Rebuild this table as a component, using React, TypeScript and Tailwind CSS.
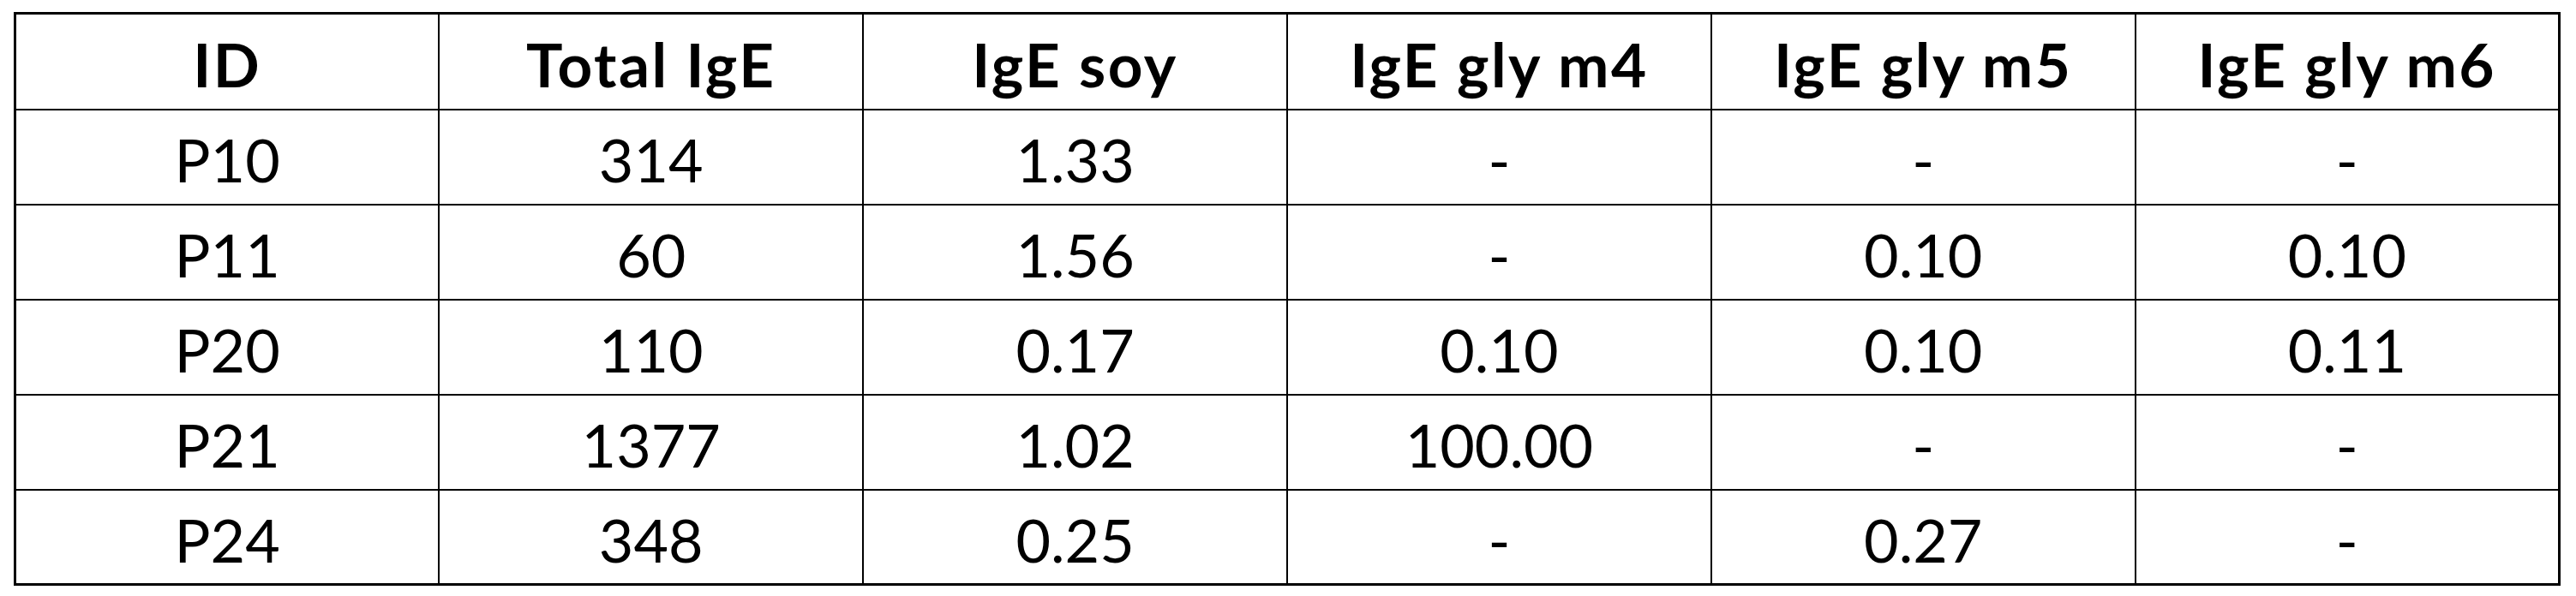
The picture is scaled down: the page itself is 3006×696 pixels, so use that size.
const headers = ['ID', 'Total IgE', 'IgE soy', 'IgE gly m4', 'IgE gly m5', 'IgE gly m6'];

const rows = [
  ['P10', '314', '1.33', '-', '-', '-'],
  ['P11', '60', '1.56', '-', '0.10', '0.10'],
  ['P20', '110', '0.17', '0.10', '0.10', '0.11'],
  ['P21', '1377', '1.02', '100.00', '-', '-'],
  ['P24', '348', '0.25', '-', '0.27', '-'],
];

export default function App() {
  return (
    <div className="min-h-[696px] w-[3006px] bg-white pl-[16px] pt-[14px] font-['Lato','Open_Sans',sans-serif] text-black">
      <table className="w-[2972px] table-fixed border-collapse border-[3px] border-black">
        <thead>
          <tr className="h-[112px]">
            {headers.map((h) => (
              <th key={h} className="border-2 border-black pt-[6px] text-center align-middle text-[71px] font-bold leading-none tracking-[2.5px]">
                {h}
              </th>
            ))}
          </tr>
        </thead>
        <tbody>
          {rows.map((row) => (
            <tr key={row[0]} className="h-[111px]">
              {row.map((cell, i) => (
                <td key={i} className="border-2 border-black pt-[6px] text-center align-middle text-[70px] font-normal leading-none">
                  {cell}
                </td>
              ))}
            </tr>
          ))}
        </tbody>
      </table>
    </div>
  );
}
